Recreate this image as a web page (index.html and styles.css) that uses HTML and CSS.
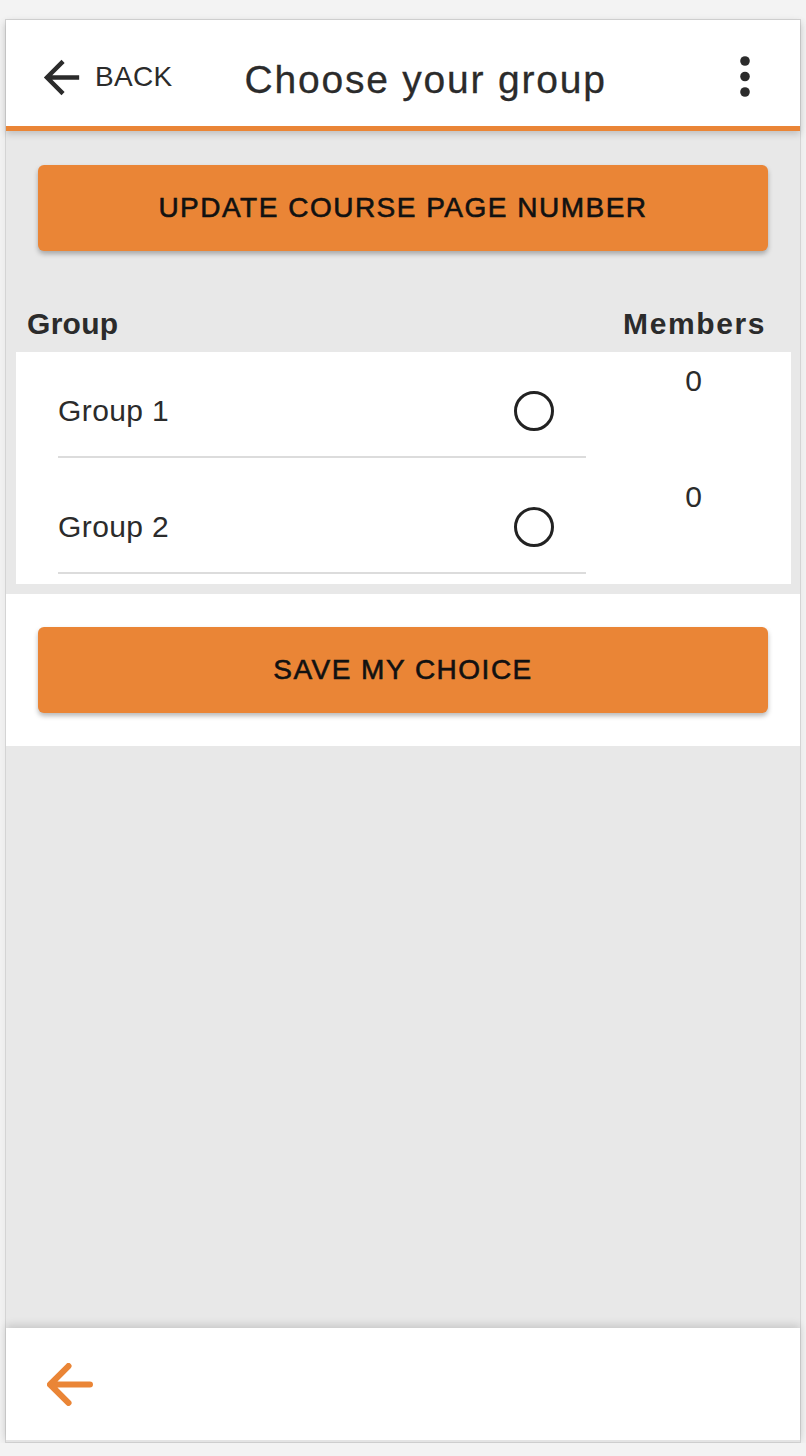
FILE: index.html
```html
<!DOCTYPE html>
<html lang="en">
<head>
<meta charset="utf-8">
<title>Choose your group</title>
<link rel="stylesheet" href="styles.css">
</head>
<body>
<div class="frame">
  <header class="topbar">
    <div class="back">
      <svg class="back-icon" viewBox="0 0 24 24" width="53" height="53" aria-hidden="true">
        <path d="M20 11H7.830l5.59-5.59L12 4l-8 8 8 8 1.41-1.41L7.83 13H20v-2z"/>
      </svg>
      <span class="back-label">BACK</span>
    </div>
    <h1 class="title">Choose your group</h1>
    <svg class="kebab" viewBox="0 0 12 44" width="12" height="44" aria-hidden="true">
      <circle cx="6" cy="6" r="4.8"/>
      <circle cx="6" cy="21.5" r="4.8"/>
      <circle cx="6" cy="37" r="4.8"/>
    </svg>
  </header>

  <main class="content">
    <div class="top-action">
      <button class="btn">UPDATE COURSE PAGE NUMBER</button>
    </div>

    <div class="table-head">
      <span>Group</span>
      <span class="members-head">Members</span>
    </div>

    <div class="table">
      <div class="row">
        <div class="group-cell">
          <span class="group-name">Group 1</span>
          <span class="radio"></span>
        </div>
        <div class="members-cell">0</div>
      </div>
      <div class="row">
        <div class="group-cell">
          <span class="group-name">Group 2</span>
          <span class="radio"></span>
        </div>
        <div class="members-cell">0</div>
      </div>
    </div>

    <div class="save-section">
      <button class="btn">SAVE MY CHOICE</button>
    </div>
  </main>

  <footer class="bottombar">
    <svg class="footer-arrow" viewBox="76 88 360 336" width="46" height="43" aria-hidden="true">
      <path d="M244 400L100 256l144-144M120 256h292"/>
    </svg>
  </footer>
</div>
</body>
</html>
```

FILE: styles.css
```css
* {
  box-sizing: border-box;
}

html, body {
  margin: 0;
  padding: 0;
}

body {
  background: #f3f3f3;
  font-family: "Liberation Sans", Arial, Helvetica, sans-serif;
  color: #2b2b2b;
  padding-top: 19px;
}

.frame {
  margin-left: 5px;
  width: 796px;
  height: 1424px;
  border: 1px solid #d4d4d4;
  background: #e8e8e8;
  display: flex;
  flex-direction: column;
  box-shadow: 0 3px 10px rgba(0, 0, 0, 0.06);
}

/* Header */
.topbar {
  position: relative;
  z-index: 2;
  height: 111px;
  flex: none;
  background: #ffffff;
  border-bottom: 5px solid #ea8536;
  box-shadow: 0 3px 7px rgba(0, 0, 0, 0.18);
  display: flex;
  align-items: center;
  padding: 8px 49px 0 29px;
}

.back {
  display: flex;
  align-items: center;
}

.back-icon {
  fill: #2b2b2b;
  display: block;
}

.back-label {
  font-size: 28px;
  line-height: 32px;
  margin-left: 7px;
  letter-spacing: 0.3px;
  color: #2b2b2b;
}

.title {
  margin: 5px 0 0 72px;
  font-size: 39px;
  line-height: 44px;
  font-weight: 400;
  letter-spacing: 1.8px;
  color: #2b2b2b;
  -webkit-text-stroke: 0.3px #2b2b2b;
}

.kebab {
  margin-left: auto;
  fill: #2b2b2b;
  display: block;
}

/* Content */
.content {
  flex: 1;
  display: flex;
  flex-direction: column;
}

.top-action {
  padding: 34px 32px 0 32px;
}

.btn {
  display: block;
  width: 100%;
  height: 86px;
  border: none;
  border-radius: 6px;
  background: #ea8536;
  color: #111111;
  font-family: "Liberation Sans", Arial, Helvetica, sans-serif;
  font-size: 28px;
  letter-spacing: 1.5px;
  -webkit-text-stroke: 0.6px #111111;
  box-shadow: 0 3px 5px rgba(0, 0, 0, 0.28);
  cursor: pointer;
}

.table-head {
  display: flex;
  justify-content: space-between;
  padding: 56px 34px 11px 21px;
  font-size: 30px;
  line-height: 34px;
  font-weight: 700;
  letter-spacing: 0.3px;
  color: #2b2b2b;
}

.members-head {
  letter-spacing: 1.6px;
}

.table {
  margin: 0 9px 10px 10px;
  background: #ffffff;
}

.row {
  display: flex;
  margin-bottom: 10px;
}

.group-cell {
  width: 528px;
  margin-left: 42px;
  height: 106px;
  padding: 14px 32px 0 0;
  border-bottom: 2px solid #dcdcdc;
  display: flex;
  align-items: center;
  justify-content: space-between;
}

.group-name {
  font-size: 30px;
  line-height: 34px;
  letter-spacing: 0.4px;
  color: #2b2b2b;
}

.radio {
  width: 40px;
  height: 40px;
  border: 3px solid #222222;
  border-radius: 50%;
  display: block;
}

.members-cell {
  flex: 1;
  padding: 12px 0 0 10px;
  text-align: center;
  font-size: 30px;
  line-height: 34px;
  color: #2b2b2b;
}

.save-section {
  background: #ffffff;
  padding: 33px 32px;
}

/* Footer */
.bottombar {
  position: relative;
  flex: none;
  height: 114px;
  background: #ffffff;
  border-bottom: 2px solid #e4e4e4;
  box-shadow: 0 -3px 8px rgba(0, 0, 0, 0.14);
  display: flex;
  align-items: center;
  padding-left: 41px;
}

.footer-arrow {
  display: block;
  fill: none;
  stroke: #ea8536;
  stroke-width: 48;
  stroke-linecap: round;
  stroke-linejoin: round;
}
```
